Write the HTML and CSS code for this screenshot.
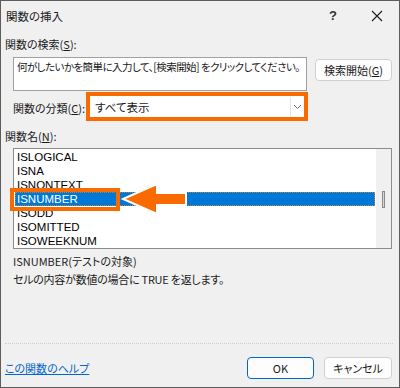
FILE: index.html
```html
<!DOCTYPE html>
<html lang="ja">
<head>
    <meta charset="UTF-8">
    <meta name="viewport" content="width=device-width, initial-scale=1.0">
    <title>関数の挿入</title>
    <link rel="stylesheet" href="styles.css">
</head>
<body>
    <div class="dialog">
        <header class="titlebar">
            <span class="title">関数の挿入</span>
            <div class="title-controls">
                <span class="help-btn">?</span>
                <span class="close-btn">
                    <svg width="12" height="12" viewBox="0 0 12 12">
                        <path d="M1 1 L11 11 M11 1 L1 11" stroke="#1a1a1a" stroke-width="1.1" fill="none"/>
                    </svg>
                </span>
            </div>
        </header>

        <div class="label search-label">関数の検索(<u>S</u>):</div>
        <div class="search-row">
            <div class="search-box">何がしたいかを簡単に入力して、[検索開始] をクリックしてください。</div>
            <button class="btn search-btn">検索開始(<u>G</u>)</button>
        </div>

        <div class="category-row">
            <span class="label category-label">関数の分類(<u>C</u>):</span>
            <div class="highlight select-frame">
                <div class="select">
                    <span class="select-value">すべて表示</span>
                    <span class="select-arrow">
                        <svg width="9" height="6" viewBox="0 0 9 6">
                            <path d="M1 1 L4.5 4.5 L8 1" stroke="#6a6a6a" stroke-width="1" fill="none"/>
                        </svg>
                    </span>
                </div>
            </div>
        </div>

        <div class="label name-label">関数名(<u>N</u>):</div>
        <div class="listbox">
            <ul class="list-items">
                <li>ISLOGICAL</li>
                <li>ISNA</li>
                <li>ISNONTEXT</li>
                <li class="selected">ISNUMBER</li>
                <li>ISODD</li>
                <li>ISOMITTED</li>
                <li>ISOWEEKNUM</li>
            </ul>
            <div class="scrollbar">
                <span class="thumb"></span>
            </div>
            <!-- annotation -->
            <div class="highlight item-mark"></div>
            <svg class="arrow" width="70" height="34" viewBox="0 0 70 34">
                <path d="M3 18 L37 3 L37 12 L66 12 L66 24 L37 24 L37 33 Z" fill="#f96a00" stroke="#fff" stroke-width="2" stroke-linejoin="miter"/>
            </svg>
        </div>

        <div class="desc">
            <div class="desc-syntax">ISNUMBER(テストの対象)</div>
            <div class="desc-text">セルの内容が数値の場合に TRUE を返します。</div>
        </div>

        <div class="separator"></div>
        <footer class="footer">
            <a href="#" class="help-link">この関数のヘルプ</a>
            <div class="footer-buttons">
                <button class="btn ok-btn">OK</button>
                <button class="btn cancel-btn">キャンセル</button>
            </div>
        </footer>
    </div>
</body>
</html>
```

FILE: styles.css
```css
body, html {
    margin: 0;
    padding: 0;
}
body {
    width: 400px;
    height: 388px;
    font-family: "Noto Sans CJK JP", "Noto Sans", sans-serif;
    font-size: 11px;
    font-feature-settings: "palt";
    color: #1a1a1a;
}
u {
    text-decoration: underline;
    text-underline-offset: 1px;
}
.dialog {
    width: 400px;
    height: 388px;
    box-sizing: border-box;
    border: 1px solid #5c5c5c;
    background-color: #f0f0f0;
    display: flex;
    flex-direction: column;
}
.titlebar {
    height: 29px;
    display: flex;
    align-items: center;
    justify-content: space-between;
    padding-left: 5px;
}
.title {
    font-size: 11.5px;
}
.title-controls {
    display: flex;
    height: 100%;
}
.help-btn, .close-btn {
    display: flex;
    align-items: center;
    justify-content: center;
    width: 44px;
    height: 100%;
}
.help-btn {
    font-family: "Liberation Sans", sans-serif;
    font-size: 13px;
    font-weight: bold;
    color: #333;
}
.label {
    line-height: 16px;
}
.search-label {
    margin-top: 6px;
    padding-left: 4px;
}
.search-row {
    display: flex;
    align-items: flex-start;
    margin-top: 5px;
    padding-left: 12px;
}
.search-box {
    width: 294px;
    height: 34px;
    box-sizing: border-box;
    background-color: #fff;
    border: 1px solid #a0a0a0;
    padding: 2px 3px;
    font-size: 10.5px;
    line-height: 14px;
    letter-spacing: -0.55px;
    white-space: nowrap;
}
.btn {
    font-family: inherit;
    font-size: 11px;
    font-feature-settings: "palt";
    color: #1a1a1a;
    background-color: #fdfdfd;
    border: 1px solid #d0d0d0;
    border-radius: 4px;
    padding: 0;
    height: 22px;
}
.search-btn {
    width: 77px;
    margin-left: 8px;
    margin-top: 2px;
}
.category-row {
    display: flex;
    align-items: center;
    margin-top: 1px;
    padding-left: 12px;
}
.category-label {
    width: 73px;
    margin-top: 2px;
}
.highlight {
    border: 4px solid #f96a00;
}
.select-frame {
    width: 214px;
    height: 21px;
}
.select {
    display: flex;
    align-items: center;
    height: 100%;
    background-color: #fff;
}
.select-value {
    flex: 1;
    padding-left: 5px;
    font-size: 11.5px;
}
.select-arrow {
    width: 13px;
    height: 19px;
    border-left: 1px solid #e3e3e3;
    display: flex;
    align-items: center;
    justify-content: center;
}
.name-label {
    margin-top: 7px;
    padding-left: 4px;
}
.listbox {
    position: relative;
    margin-top: 4px;
    margin-left: 12px;
    width: 379px;
    height: 101px;
    box-sizing: border-box;
    border: 1px solid #8c8c8c;
    background-color: #fff;
    display: flex;
}
.list-items {
    list-style: none;
    margin: 0;
    padding: 1px 1px 0 1px;
    flex: 1;
    font-family: "Liberation Sans", sans-serif;
    font-size: 11.5px;
    color: #000;
}
.list-items li {
    height: 14px;
    line-height: 14px;
    padding-left: 2px;
}
.list-items li.selected {
    background-color: #0078d7;
    color: #fff;
    outline: 1px dotted #c08040;
    outline-offset: -1px;
}
.scrollbar {
    width: 15px;
    background-color: #f0f0f0;
    position: relative;
}
.thumb {
    position: absolute;
    left: 6px;
    top: 42px;
    width: 1px;
    height: 15px;
    border: 1px solid #8a8a8a;
    background-color: #d8d8d8;
}
.item-mark {
    position: absolute;
    left: -4px;
    top: 39px;
    width: 102px;
    height: 15px;
}
.arrow {
    position: absolute;
    left: 106px;
    top: 32px;
}
.desc {
    margin-top: 4px;
    padding-left: 12px;
    line-height: 16px;
}
.desc-text {
    margin-top: 2px;
    letter-spacing: -0.25px;
}
.separator {
    margin: auto 6px 13px 4px;
    border-top: 1px dotted #cfcfcf;
}
.footer {
    display: flex;
    align-items: center;
    justify-content: space-between;
    padding: 0 7px 8px 4px;
}
.help-link {
    color: #0066cc;
    text-decoration: underline;
}
.footer-buttons {
    display: flex;
    gap: 10px;
}
.ok-btn {
    width: 67px;
    border-color: #0067c0;
}
.cancel-btn {
    width: 68px;
}
```
